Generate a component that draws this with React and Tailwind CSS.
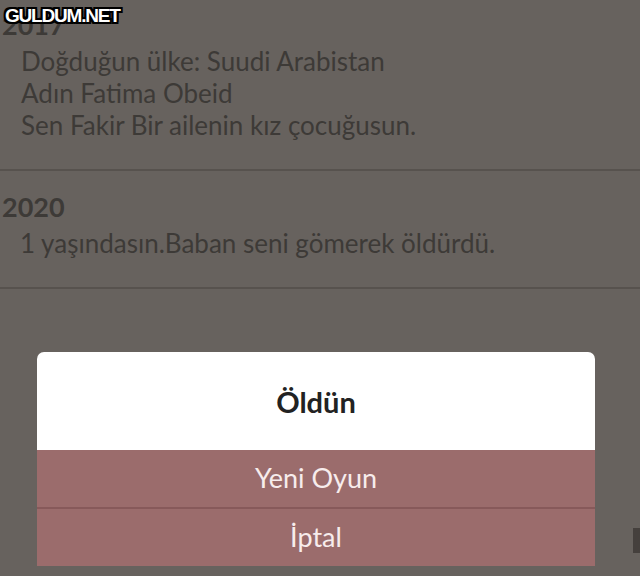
export default function App() {
  return (
    <div className="relative h-[576px] w-[640px] overflow-hidden bg-[#67625e] font-['Lato','Liberation_Sans',sans-serif] text-[#3d3a37]">
      <section className="-mt-[11px] border-b-2 border-[#57524e] pb-[28px] pt-[20px]">
        <h2 className="mb-1 pl-[2px] text-[27px] font-bold leading-[32px]">2017</h2>
        <div className="pl-[21px] text-[26px] leading-[32px]">
          <p>Doğduğun ülke: Suudi Arabistan</p>
          <p>Adın Fatima Obeid</p>
          <p>Sen Fakir Bir ailenin kız çocuğusun.</p>
        </div>
      </section>
      <section className="border-b-2 border-[#57524e] pb-[28px] pt-[20px]">
        <h2 className="mb-1 pl-[2px] text-[27px] font-bold leading-[32px]">2020</h2>
        <div className="pl-[20px] text-[26px] leading-[32px]">
          <p>1 yaşındasın.Baban seni gömerek öldürdü.</p>
        </div>
      </section>

      <div className="absolute left-[5px] top-[5px] text-[19px] font-bold leading-[22px] tracking-[-1.2px] text-white [font-family:'Liberation_Sans',sans-serif] [text-shadow:2px_0_0_#000,-2px_0_0_#000,0_2px_0_#000,0_-2px_0_#000,2px_2px_0_#000,-2px_-2px_0_#000,2px_-2px_0_#000,-2px_2px_0_#000]">
        GULDUM.NET
      </div>

      <div className="absolute left-[633px] top-[528px] h-[25px] w-[7px] bg-[#45403d]" />

      <div className="absolute left-[37px] top-[352px] flex w-[558px] flex-col overflow-hidden rounded-t-[7px]">
        <div className="flex h-[98px] items-center justify-center bg-white pt-[2px] text-[29px] font-bold text-[#222]">
          Öldün
        </div>
        <div className="flex h-[57px] items-center justify-center bg-[#9b6c6c] text-[27px] text-[#f7ecec]">
          Yeni Oyun
        </div>
        <div className="h-[2px] bg-[#87595a]" />
        <div className="flex h-[57px] items-center justify-center bg-[#9b6c6c] text-[27px] text-[#f7ecec]">
          İptal
        </div>
      </div>
    </div>
  );
}
